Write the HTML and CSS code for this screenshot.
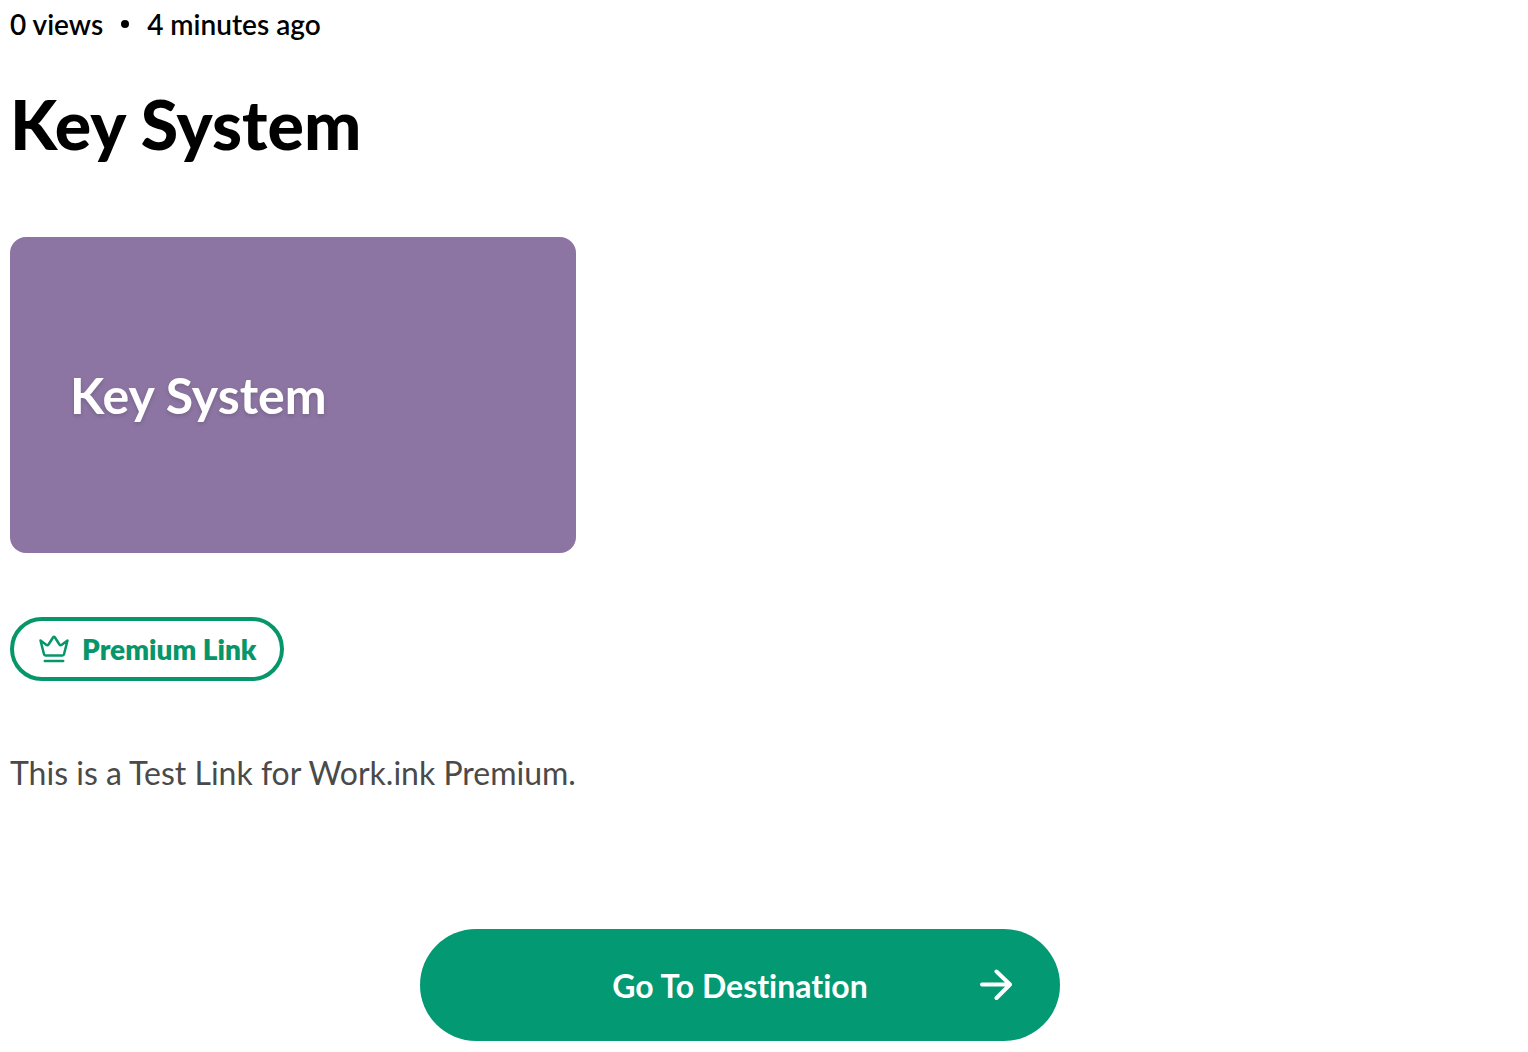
FILE: index.html
```html
<!DOCTYPE html>
<html lang="en">
<head>
    <meta charset="UTF-8">
    <meta name="viewport" content="width=device-width, initial-scale=1.0">
    <title>Key System</title>
    <link rel="stylesheet" href="styles.css">
</head>
<body>
    <main class="page">
        <div class="meta">
            <span>0 views</span>
            <span class="dot"></span>
            <span>4 minutes ago</span>
        </div>
        <h1>Key System</h1>
        <div class="preview">
            <h2>Key System</h2>
        </div>
        <div class="badge">
            <svg class="crown" viewBox="0 0 32 32" aria-hidden="true">
                <path d="M2.500 7.500 L8.200 11.800 Q9.700 12.800 10.700 11.300 L15.200 4.300 Q16 3.200 16.800 4.300 L21.300 11.300 Q22.300 12.800 23.800 11.800 L29.500 7.500 L26 21.300 Q25.700 22.500 24.500 22.500 H7.500 Q6.300 22.500 6 21.300 Z"/>
                <path d="M6.800 28 H25.200"/>
            </svg>
            <span>Premium Link</span>
        </div>
        <p class="description">This is a Test Link for Work.ink Premium.</p>
        <button class="go" type="button">
            <span>Go To Destination</span>
            <svg class="arrow" viewBox="0 0 32 32" aria-hidden="true">
                <path d="M2 15.500 H30 M16.500 2.500 L30 15.500 L16.500 29"/>
            </svg>
        </button>
    </main>
</body>
</html>
```
FILE: styles.css
```css
* {
    box-sizing: border-box;
}

body {
    margin: 0;
    background-color: #fff;
    color: #000;
    font-family: Lato, "Open Sans", sans-serif;
}

.page {
    display: flex;
    flex-direction: column;
    align-items: flex-start;
    padding: 4px 58px 11px 10px;
}

.meta {
    display: flex;
    align-items: center;
    gap: 18px;
    font-size: 28px;
    font-weight: 600;
    line-height: 40px;
}

.dot {
    width: 8px;
    height: 8px;
    border-radius: 50%;
    background-color: #000;
}

h1 {
    margin: 40px 0 73px;
    font-size: 68px;
    font-weight: 900;
    line-height: 80px;
}

.preview {
    display: flex;
    align-items: center;
    width: 566px;
    max-width: 100%;
    height: 316px;
    padding: 0 60px;
    border-radius: 16px;
    background-color: #8c75a2;
    color: #fff;
}

h2 {
    margin: 0;
    font-size: 50px;
    font-weight: 700;
    line-height: 60px;
    text-shadow: 0 2px 4px rgba(0, 0, 0, 0.15);
}

.badge {
    display: flex;
    align-items: center;
    gap: 12px;
    height: 64px;
    margin-top: 64px;
    padding: 0 24px;
    border: 4px solid #079669;
    border-radius: 32px;
    color: #079669;
    font-size: 28px;
    font-weight: 800;
    line-height: 40px;
}

.crown,
.arrow {
    width: 32px;
    height: 32px;
    fill: none;
    stroke: currentColor;
    stroke-linecap: round;
    stroke-linejoin: round;
}

.crown {
    stroke-width: 2.5;
}

.description {
    margin: 68px 0 132px;
    color: #4a4a4a;
    font-size: 32px;
    line-height: 48px;
}

.go {
    display: grid;
    grid-template-columns: 32px 1fr 32px;
    align-items: center;
    align-self: center;
    width: 640px;
    max-width: 100%;
    height: 112px;
    padding: 0 48px;
    border: none;
    border-radius: 56px;
    background-color: #029973;
    color: #fff;
    font-family: inherit;
    font-size: 32px;
    font-weight: 700;
    font-variant-ligatures: none;
    cursor: pointer;
}

.go span {
    grid-column: 2;
}

.arrow {
    stroke-width: 4;
}

.go:hover {
    background-color: #028564;
}
```
